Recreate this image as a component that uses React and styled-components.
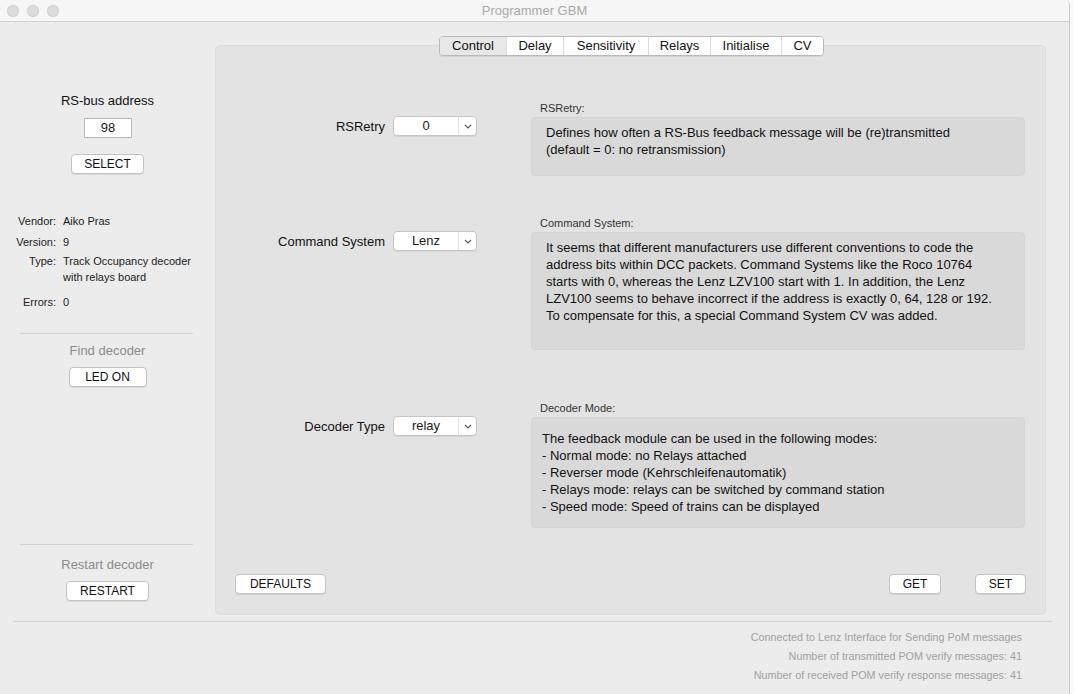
import styled, { createGlobalStyle } from 'styled-components';

const GlobalStyle = createGlobalStyle`
  html, body {
    margin: 0;
    padding: 0;
    background: #fbfbfb;
    font-family: "Liberation Sans", Arial, sans-serif;
  }
`;

const Window = styled.div`
  width: 1069px;
  height: 694px;
  background: #ececec;
  border-right: 1px solid #c9c9c9;
  border-top-right-radius: 5px;
  border-top-left-radius: 5px;
  display: flex;
  flex-direction: column;
  overflow: hidden;
  color: #1a1a1a;
`;

const TitleBar = styled.div`
  height: 22px;
  flex: none;
  background: #f6f6f6;
  border-bottom: 1px solid #d1d1d1;
  box-sizing: border-box;
  display: flex;
  align-items: center;
  position: relative;
  padding-left: 7px;
  gap: 8px;
`;

const Light = styled.span`
  width: 12px;
  height: 12px;
  border-radius: 50%;
  background: #dcdcdc;
  box-shadow: inset 0 0 0 1px #d0d0d0;
`;

const Title = styled.div`
  position: absolute;
  left: 0;
  right: 0;
  text-align: center;
  font-size: 13px;
  color: #a9a9a9;
  pointer-events: none;
`;

const Body = styled.div`
  display: flex;
  padding-top: 23px;
  flex: none;
`;

const Sidebar = styled.div`
  width: 215px;
  flex: none;
  display: flex;
  flex-direction: column;
  align-items: center;
  padding-top: 48px;
  box-sizing: border-box;
`;

const SideTitle = styled.div`
  font-size: 13px;
  line-height: 16px;
  color: ${p => (p.$muted ? '#8b8b8b' : '#111')};
  margin-top: ${p => p.$top || 0}px;
`;

const AddressInput = styled.div`
  width: 48px;
  height: 20px;
  box-sizing: border-box;
  background: #fff;
  border: 1px solid #b9b9b9;
  font-size: 13px;
  line-height: 18px;
  text-align: center;
  margin: 9px 0 0 1px;
`;

const Button = styled.button`
  font-family: inherit;
  height: 20px;
  width: ${p => p.$w}px;
  margin-top: ${p => p.$top || 0}px;
  padding: 0;
  background: #fff;
  border: 1px solid #c3c3c3;
  border-radius: 4px;
  box-shadow: 0 1px 0 rgba(0, 0, 0, 0.08);
  font-size: 12px;
  color: #111;
  cursor: pointer;
`;

const InfoGrid = styled.div`
  align-self: stretch;
  display: grid;
  grid-template-columns: 56px 1fr;
  column-gap: 7px;
  margin-top: 39px;
  font-size: 11px;
  line-height: 16px;
`;

const InfoLabel = styled.div`
  text-align: right;
  color: #222;
`;

const InfoValue = styled.div`
  color: #222;
  margin-bottom: ${p => p.$gap || 0}px;
`;

const Divider = styled.div`
  width: 173px;
  height: 1px;
  background: #d3d3d3;
  margin-top: ${p => p.$top}px;
  margin-left: -3px;
`;

const Spacer = styled.div`
  flex: 1;
`;

const Panel = styled.div`
  width: 831px;
  height: 570px;
  background: #e3e3e3;
  border: 1px solid #dcdcdc;
  border-radius: 5px;
  box-sizing: border-box;
  display: flex;
  flex-direction: column;
  padding: 0 19px 20px 19px;
`;

const Tabs = styled.div`
  align-self: center;
  display: flex;
  margin-top: -10px;
  margin-left: 2px;
  height: 20px;
  box-sizing: border-box;
  background: #fff;
  border: 1px solid #b9b9b9;
  border-radius: 4px;
  overflow: hidden;
  box-shadow: 0 1px 0 rgba(0, 0, 0, 0.06);
`;

const Tab = styled.div`
  box-sizing: border-box;
  font-size: 13px;
  line-height: 18px;
  width: ${p => p.$w}px;
  text-align: center;
  background: ${p => (p.$active ? '#e8e8e8' : '#fff')};
  border-left: ${p => (p.$first ? 'none' : '1px solid #dcdcdc')};
  color: #111;
`;

const Row = styled.div`
  display: grid;
  grid-template-columns: 242px 494px;
  column-gap: 54px;
  margin-top: ${p => p.$top}px;
`;

const Control = styled.div`
  display: flex;
  justify-content: flex-end;
  align-items: center;
  gap: 8px;
  padding-top: 14px;
  align-self: start;
`;

const ControlLabel = styled.span`
  font-size: 13px;
  color: #111;
`;

const Select = styled.div`
  width: 84px;
  height: 20px;
  box-sizing: border-box;
  background: #fff;
  border: 1px solid #c6c6c6;
  border-radius: 4px;
  box-shadow: 0 1px 0 rgba(0, 0, 0, 0.06);
  display: flex;
  font-size: 13px;
  line-height: 18px;
`;

const SelectValue = styled.span`
  flex: 1;
  text-align: center;
`;

const SelectArrow = styled.span`
  width: 17px;
  border-left: 1px solid #e2e2e2;
  display: flex;
  align-items: center;
  justify-content: center;
`;

const Desc = styled.div`
  display: flex;
  flex-direction: column;
`;

const DescLabel = styled.div`
  font-size: 11px;
  line-height: 13px;
  color: #333;
  padding-left: 9px;
  margin-bottom: 2px;
`;

const DescBox = styled.div`
  height: ${p => p.$h}px;
  box-sizing: border-box;
  background: #d9d9d9;
  border: 1px solid #d4d4d4;
  border-radius: 4px;
  padding: ${p => p.$pt}px 10px 0 ${p => p.$pl}px;
  font-size: 13px;
  line-height: 17px;
  color: #111;
`;

const ButtonRow = styled.div`
  display: flex;
  align-items: flex-end;
  gap: 34px;
`;

const Footer = styled.div`
  margin: 6px 17px 0 13px;
  border-top: 1px solid #d3d3d3;
  padding: 8px 30px 0 0;
  display: flex;
  flex-direction: column;
  align-items: flex-end;
  gap: 4px;
`;

const Status = styled.div`
  font-size: 10.8px;
  line-height: 15px;
  color: #a0a0a0;
`;

const Chevron = () => (
  <svg width="8" height="5" viewBox="0 0 8 5">
    <polyline points="1,1 4,4 7,1" fill="none" stroke="#555" strokeWidth="1.1" />
  </svg>
);

const tabs = [
  ['Control', 66],
  ['Delay', 57],
  ['Sensitivity', 85],
  ['Relays', 62],
  ['Initialise', 71],
  ['CV', 42],
];

const rows = [
  {
    label: 'RSRetry',
    value: '0',
    title: 'RSRetry:',
    top: 46,
    h: 59,
    pt: 6,
    pl: 14,
    lines: [
      'Defines how often a RS-Bus feedback message will be (re)transmitted',
      '(default = 0: no retransmission)',
    ],
  },
  {
    label: 'Command System',
    value: 'Lenz',
    title: 'Command System:',
    top: 41,
    h: 118,
    pt: 6,
    pl: 14,
    lines: [
      'It seems that different manufacturers use different conventions to code the',
      'address bits within DCC packets. Command Systems like the Roco 10764',
      'starts with 0, whereas the Lenz LZV100 start with 1. In addition, the Lenz',
      'LZV100 seems to behave incorrect if the address is exactly 0, 64, 128 or 192.',
      'To compensate for this, a special Command System CV was added.',
    ],
  },
  {
    label: 'Decoder Type',
    value: 'relay',
    title: 'Decoder Mode:',
    top: 52,
    h: 111,
    pt: 12,
    pl: 10,
    lines: [
      'The feedback module can be used in the following modes:',
      '- Normal mode: no Relays attached',
      '- Reverser mode (Kehrschleifenautomatik)',
      '- Relays mode: relays can be switched by command station',
      '- Speed mode: Speed of trains can be displayed',
    ],
  },
];

export default function App() {
  return (
    <>
      <GlobalStyle />
      <Window>
        <TitleBar>
          <Light />
          <Light />
          <Light />
          <Title>Programmer GBM</Title>
        </TitleBar>
        <Body>
          <Sidebar>
            <SideTitle>RS-bus address</SideTitle>
            <AddressInput>98</AddressInput>
            <Button $w={73} $top={16}>SELECT</Button>
            <InfoGrid>
              <InfoLabel>Vendor:</InfoLabel>
              <InfoValue $gap={5}>Aiko Pras</InfoValue>
              <InfoLabel>Version:</InfoLabel>
              <InfoValue $gap={3}>9</InfoValue>
              <InfoLabel>Type:</InfoLabel>
              <InfoValue $gap={9}>Track Occupancy decoder<br />with relays board</InfoValue>
              <InfoLabel>Errors:</InfoLabel>
              <InfoValue>0</InfoValue>
            </InfoGrid>
            <Divider $top={23} />
            <SideTitle $muted $top={9}>Find decoder</SideTitle>
            <Button $w={78} $top={8}>LED ON</Button>
            <Divider $top={157} />
            <SideTitle $muted $top={12}>Restart decoder</SideTitle>
            <Button $w={83} $top={8}>RESTART</Button>
          </Sidebar>
          <Panel>
            <Tabs>
              {tabs.map(([name, w], i) => (
                <Tab key={name} $w={w} $active={i === 0} $first={i === 0}>
                  {name}
                </Tab>
              ))}
            </Tabs>
            {rows.map(r => (
              <Row key={r.label} $top={r.top}>
                <Control>
                  <ControlLabel>{r.label}</ControlLabel>
                  <Select>
                    <SelectValue>{r.value}</SelectValue>
                    <SelectArrow><Chevron /></SelectArrow>
                  </Select>
                </Control>
                <Desc>
                  <DescLabel>{r.title}</DescLabel>
                  <DescBox $h={r.h} $pt={r.pt} $pl={r.pl}>
                    {r.lines.map(l => (
                      <div key={l}>{l}</div>
                    ))}
                  </DescBox>
                </Desc>
              </Row>
            ))}
            <Spacer />
            <ButtonRow>
              <Button $w={91}>DEFAULTS</Button>
              <Spacer />
              <Button $w={52}>GET</Button>
              <Button $w={51}>SET</Button>
            </ButtonRow>
          </Panel>
        </Body>
        <Footer>
          <Status>Connected to Lenz Interface for Sending PoM messages</Status>
          <Status>Number of transmitted POM verify messages: 41</Status>
          <Status>Number of received POM verify response messages: 41</Status>
        </Footer>
      </Window>
    </>
  );
}
